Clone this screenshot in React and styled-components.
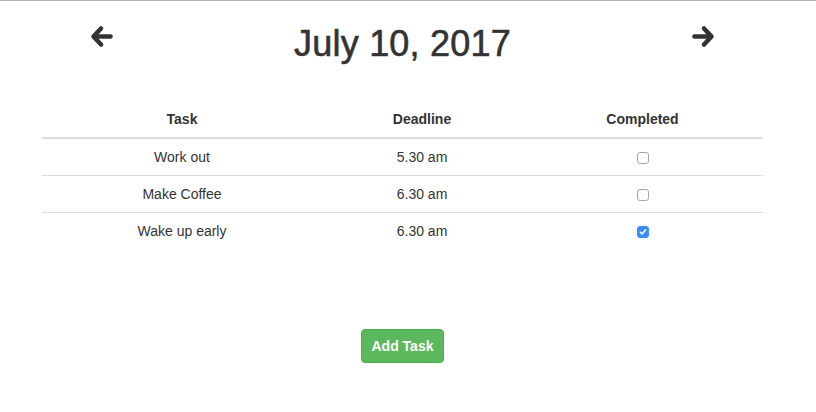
import React, { useState } from "react";
import styled, { createGlobalStyle } from "styled-components";

const Global = createGlobalStyle`
  html, body { margin: 0; padding: 0; background: #fff; }
  body {
    font-family: "Liberation Sans", Arial, sans-serif;
    font-size: 14px;
    line-height: 20px;
    color: #333;
  }
`;

const TopRule = styled.div`
  height: 1px;
  background: #b3b3b3;
`;

const Page = styled.div`
  width: 721px;
  margin-left: 42px;
  display: flex;
  flex-direction: column;
`;

const Header = styled.div`
  display: grid;
  grid-template-columns: 120px 1fr 120px;
  align-items: start;
`;

const ArrowButton = styled.button`
  justify-self: center;
  margin-top: 23px;
  width: 24px;
  height: 24px;
  padding: 0;
  border: 0;
  background: none;
  color: #333;
  display: flex;
  cursor: pointer;
`;

const Title = styled.h1`
  margin: 23px 0 0;
  text-align: center;
  font-size: 36px;
  line-height: 40px;
  font-weight: 500;
  color: #333;
  -webkit-text-stroke: 0.6px #333;
  letter-spacing: 0.2px;
`;

const Table = styled.table`
  margin-top: 37px;
  width: 721px;
  border-collapse: collapse;
  table-layout: fixed;
`;

const Th = styled.th`
  box-sizing: border-box;
  width: ${(p) => p.$w}px;
  padding: 8px;
  font-weight: bold;
  text-align: center;
  border-bottom: 2px solid #ddd;
`;

const Td = styled.td`
  padding: 8px;
  text-align: center;
  border-top: 1px solid #ddd;
  height: 20px;
`;

const Box = styled.span`
  display: inline-flex;
  align-items: center;
  justify-content: center;
  box-sizing: border-box;
  width: 12px;
  height: 12px;
  vertical-align: middle;
  border-radius: 3px;
  border: 1px solid ${(p) => (p.$checked ? "#3b8ef6" : "#a6a6a6")};
  background: ${(p) => (p.$checked ? "#3b8ef6" : "#fff")};
  cursor: pointer;
`;

const Footer = styled.div`
  display: flex;
  justify-content: center;
  margin-top: 80px;
`;

const AddButton = styled.button`
  font-family: "Liberation Sans", Arial, sans-serif;
  font-size: 14px;
  line-height: 20px;
  font-weight: bold;
  color: #fff;
  background: #5cb85c;
  border: 1px solid #4cae4c;
  border-radius: 4px;
  padding: 6px 10px;
  cursor: pointer;
`;

const Arrow = ({ dir }) => (
  <svg width="24" height="24" viewBox="0 0 24 24" fill="none" stroke="currentColor" strokeWidth="4.6" strokeLinecap="round" strokeLinejoin="round">
    {dir === "left" ? (
      <>
        <path d="M20.5 12.5H6" />
        <path d="M11 4.5L3.5 12.5L11 20.5" />
      </>
    ) : (
      <>
        <path d="M3.5 12.5H18" />
        <path d="M13 4.5L20.5 12.5L13 20.5" />
      </>
    )}
  </svg>
);

const Check = ({ checked, onClick }) => (
  <Box $checked={checked} onClick={onClick}>
    {checked && (
      <svg width="8" height="8" viewBox="0 0 8 8" fill="none" stroke="#fff" strokeWidth="1.5" strokeLinecap="round" strokeLinejoin="round">
        <path d="M1.5 4.2L3.2 6L6.6 1.8" />
      </svg>
    )}
  </Box>
);

export default function App() {
  const [tasks, setTasks] = useState([
    { name: "Work out", deadline: "5.30 am", done: false },
    { name: "Make Coffee", deadline: "6.30 am", done: false },
    { name: "Wake up early", deadline: "6.30 am", done: true },
  ]);
  const toggle = (i) =>
    setTasks((t) => t.map((x, j) => (j === i ? { ...x, done: !x.done } : x)));

  return (
    <>
      <Global />
      <TopRule />
      <Page>
        <Header>
          <ArrowButton aria-label="Previous day">
            <Arrow dir="left" />
          </ArrowButton>
          <Title>July 10, 2017</Title>
          <ArrowButton aria-label="Next day">
            <Arrow dir="right" />
          </ArrowButton>
        </Header>
        <Table>
          <thead>
            <tr>
              <Th $w={280}>Task</Th>
              <Th $w={200}>Deadline</Th>
              <Th $w={241}>Completed</Th>
            </tr>
          </thead>
          <tbody>
            {tasks.map((t, i) => (
              <tr key={i}>
                <Td>{t.name}</Td>
                <Td>{t.deadline}</Td>
                <Td>
                  <Check checked={t.done} onClick={() => toggle(i)} />
                </Td>
              </tr>
            ))}
          </tbody>
        </Table>
        <Footer>
          <AddButton>Add Task</AddButton>
        </Footer>
      </Page>
    </>
  );
}
